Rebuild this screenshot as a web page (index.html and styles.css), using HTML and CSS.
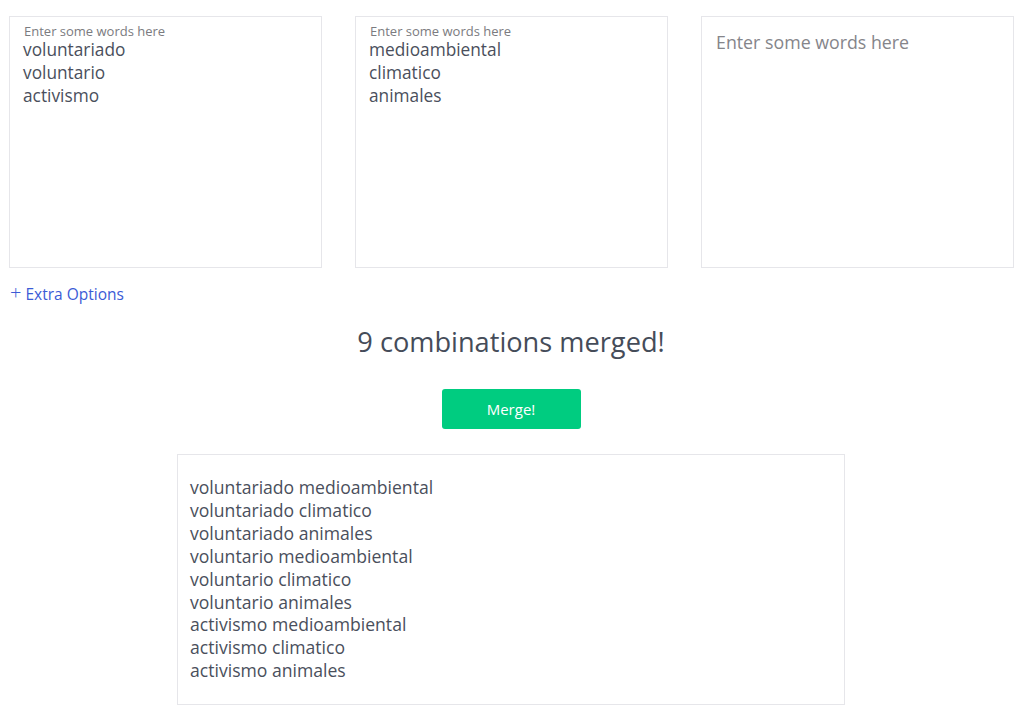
FILE: index.html
```html
<!DOCTYPE html>
<html>
<head>
<meta charset="utf-8">
<link rel="stylesheet" href="styles.css">
</head>
<body>
<div class="page">
  <div class="inputs">
    <div class="box filled">
      <div class="label">Enter some words here</div>
      <div class="words">voluntariado<br>voluntario<br>activismo</div>
    </div>
    <div class="box filled">
      <div class="label">Enter some words here</div>
      <div class="words">medioambiental<br>climatico<br>animales</div>
    </div>
    <div class="box empty">
      <div class="placeholder">Enter some words here</div>
    </div>
  </div>
  <div class="extra"><span class="plus">+</span> Extra Options</div>
  <h1 class="title">9 combinations merged!</h1>
  <div class="btnrow"><button class="merge">Merge!</button></div>
  <div class="output">
    voluntariado medioambiental<br>
    voluntariado climatico<br>
    voluntariado animales<br>
    voluntario medioambiental<br>
    voluntario climatico<br>
    voluntario animales<br>
    activismo medioambiental<br>
    activismo climatico<br>
    activismo animales
  </div>
</div>
</body>
</html>
```

FILE: styles.css
```css
html, body {
  margin: 0;
  padding: 0;
  background: #fff;
}
body {
  font-family: "Open Sans", sans-serif;
  color: #4a4f5c;
}
.page {
  padding: 16px 11px 0 9px;
}
.inputs {
  display: grid;
  grid-template-columns: 313px 313px 313px;
  column-gap: 33px;
}
.box {
  height: 250px;
  border: 1px solid #e6e6ea;
  box-sizing: content-box;
}
.label {
  font-size: 13px;
  color: #7b7b80;
  margin: 6px 0 0 14px;
  line-height: 16px;
}
.words {
  font-size: 17.3px;
  line-height: 23px;
  margin: -1px 0 0 13px;
  color: #4a4f5c;
}
.placeholder {
  font-size: 17.8px;
  color: #85858a;
  margin: 15px 0 0 14px;
  line-height: 20px;
}
.extra {
  margin: 16px 0 0 1px;
  font-size: 15.5px;
  color: #3b5bd6;
  line-height: 18px;
}
.plus {
  font-size: 20px;
  font-weight: 300;
}
.title {
  margin: 22px 0 0;
  text-align: center;
  font-size: 27.2px;
  font-weight: 400;
  line-height: 34px;
  color: #454c59;
}
.btnrow {
  display: flex;
  justify-content: center;
  margin-top: 30px;
}
.merge {
  width: 139px;
  height: 40px;
  border: none;
  border-radius: 3px;
  background: #00cc80;
  color: #fff;
  font-family: "Open Sans", sans-serif;
  font-size: 15px;
  padding: 0;
}
.output {
  width: 642px;
  height: 215px;
  margin: 25px 0 0 168px;
  border: 1px solid #e6e6ea;
  padding: 21px 12px 13px 12px;
  font-size: 17.6px;
  line-height: 22.9px;
  color: #4a4f5c;
}
```
